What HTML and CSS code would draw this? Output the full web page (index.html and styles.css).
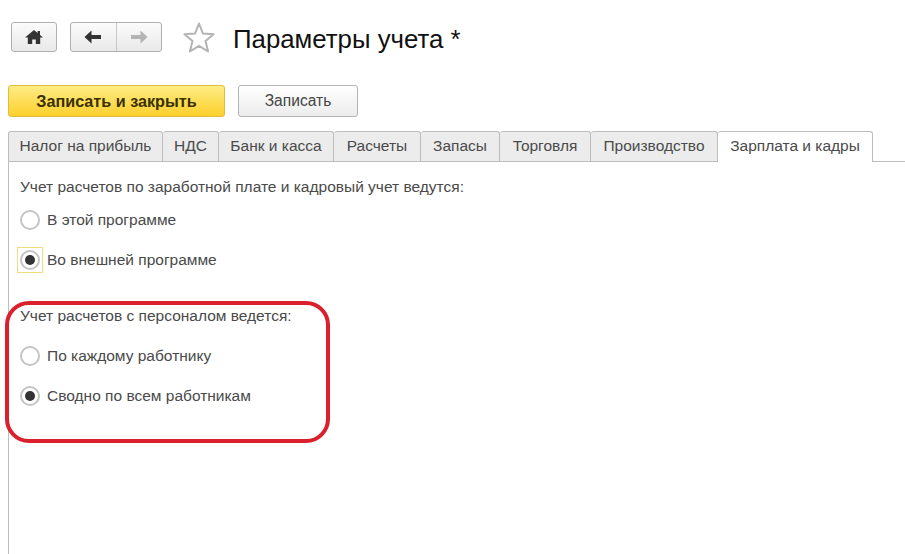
FILE: index.html
```html
<!DOCTYPE html>
<html lang="ru">
<head>
<meta charset="utf-8">
<title>Параметры учета</title>
<link rel="stylesheet" href="styles.css">
</head>
<body>
<div class="page">
  <header class="head">
    <button class="nav home" aria-label="Начало"><svg width="20" height="16" viewBox="0 0 20 16"><path d="M10 1 1 8.6h2.8V15h4.4v-4.4h3.6V15h4.4V8.6H19l-3-2.6V2h-2.4v1.9z" fill="#333"/></svg></button>
    <div class="nav group">
      <button class="seg" aria-label="Назад"><svg width="20" height="14" viewBox="0 0 20 14"><path d="M8.5 0.5 1.5 7l7 6.5V9h9.5V5H8.500z" fill="#333"/></svg></button>
      <button class="seg seg-off" aria-label="Вперед"><svg width="20" height="14" viewBox="0 0 20 14"><path d="M11.500 0.5 18.500 7l-7 6.500V9H2V5h9.500z" fill="#b4b4b4"/></svg></button>
    </div>
    <svg class="star" width="34" height="32" viewBox="0 0 34 32"><path d="M17 2.500 21 12.600 31.600 13.300 23.500 20.100 26.100 30.500 17 24.800 7.900 30.500 10.500 20.100 2.400 13.300 13 12.600z" fill="#fff" stroke="#b4b4b4" stroke-width="2" stroke-linejoin="round"/></svg>
    <h1 class="title">Параметры учета *</h1>
  </header>
  <div class="actions">
    <button class="btn primary">Записать и закрыть</button>
    <button class="btn">Записать</button>
  </div>
  <nav class="tabs">
    <span class="tab">Налог на прибыль</span>
    <span class="tab">НДС</span>
    <span class="tab">Банк и касса</span>
    <span class="tab">Расчеты</span>
    <span class="tab">Запасы</span>
    <span class="tab">Торговля</span>
    <span class="tab">Производство</span>
    <span class="tab active">Зарплата и кадры</span>
  </nav>
  <main class="panel">
    <section class="group-a">
      <p class="label">Учет расчетов по заработной плате и кадровый учет ведутся:</p>
      <div class="option"><span class="radio"></span><span class="text">В этой программе</span></div>
      <div class="option"><span class="focus"><span class="radio on"></span></span><span class="text">Во внешней программе</span></div>
    </section>
    <section class="group-b">
      <p class="label">Учет расчетов с персоналом ведется:</p>
      <div class="option"><span class="radio"></span><span class="text">По каждому работнику</span></div>
      <div class="option"><span class="radio on"></span><span class="text">Сводно по всем работникам</span></div>
    </section>
  </main>
  <div class="highlight"></div>
</div>
</body>
</html>
```
FILE: styles.css
```css
html, body { margin: 0; padding: 0; background: #fff; }
.page {
  position: relative;
  width: 905px;
  height: 554px;
  overflow: hidden;
  font-family: "Liberation Sans", Arial, sans-serif;
  font-size: 15.5px;
  color: #4a4a4a;
}
button { font-family: inherit; padding: 0; margin: 0; }
.head {
  display: flex;
  align-items: center;
  padding: 22px 0 0 11px;
  height: 30px;
}
.nav {
  height: 30px;
  box-sizing: border-box;
  border: 1px solid #b0b0b0;
  border-radius: 3px;
  background: linear-gradient(#fbfbfb, #e9e9e9);
}
.home { width: 46px; display: flex; align-items: center; justify-content: center; }
.group { display: flex; margin-left: 13px; width: 92px; }
.seg {
  flex: 1;
  border: 0;
  background: none;
  display: flex;
  align-items: center;
  justify-content: center;
}
.seg-off { border-left: 1px solid #c8c8c8; }
.star { margin-left: 20px; }
.title {
  margin: 0 0 0 17px;
  font-weight: normal;
  font-size: 25.8px;
  color: #111;
  position: relative;
  top: 2px;
}
.actions {
  display: flex;
  gap: 13px;
  padding: 33px 0 0 8px;
}
.btn {
  height: 32px;
  width: 120px;
  box-sizing: border-box;
  border: 1px solid #b4b4b4;
  border-radius: 3px;
  background: linear-gradient(#ffffff, #ececec);
  color: #444;
  font-size: 15.6px;
}
.primary {
  width: 217px;
  border-color: #e0bd3a;
  background: linear-gradient(#fdec85, #fdd02c);
  color: #3a3000;
  font-weight: bold;
  font-size: 16.2px;
}
.tabs {
  display: grid;
  grid-template-columns: 155px 56px 115px 87px 79px 91px 127px 155px;
  justify-content: start;
  margin: 14px 0 0 8px;
  height: 31px;
  box-sizing: border-box;
  border-bottom: 1px solid #bdbdbd;
}
.tab {
  height: 30px;
  box-sizing: border-box;
  text-align: center;
  line-height: 28px;
  background: #ececec;
  border: 1px solid #bdbdbd;
  border-bottom: 0;
  border-left-width: 0;
  border-radius: 3px 3px 0 0;
  white-space: nowrap;
}
.tab:first-child { border-left-width: 1px; }
.tab.active {
  height: 31px;
  background: #fff;
}
.panel {
  margin-left: 8px;
  height: 393px;
  border-left: 1px solid #bdbdbd;
  padding-left: 11px;
}
.label { margin: 0; line-height: 17px; }
.group-a { padding-top: 16px; }
.group-b { padding-top: 27px; }
.option {
  display: flex;
  align-items: center;
  height: 40px;
  gap: 7px;
}
.text { padding-bottom: 1px; }
.group-a .label + .option { margin-top: 5px; }
.group-b .label + .option { margin-top: 12px; }
.radio {
  flex: none;
  width: 20px;
  height: 20px;
  box-sizing: border-box;
  border: 2px solid #c4c4c4;
  border-radius: 50%;
  background: #fff;
  display: flex;
  align-items: center;
  justify-content: center;
}
.radio.on::after {
  content: "";
  width: 10px;
  height: 10px;
  border-radius: 50%;
  background: #333;
}
.focus {
  flex: none;
  width: 26px;
  height: 26px;
  margin: 0 -3px;
  box-sizing: border-box;
  border: 1px solid #efdc7a;
  display: flex;
  align-items: center;
  justify-content: center;
}
.highlight {
  position: absolute;
  left: 5px;
  top: 301px;
  width: 325px;
  height: 142px;
  box-sizing: border-box;
  border: 4px solid #d9202c;
  border-radius: 24px;
}
```
